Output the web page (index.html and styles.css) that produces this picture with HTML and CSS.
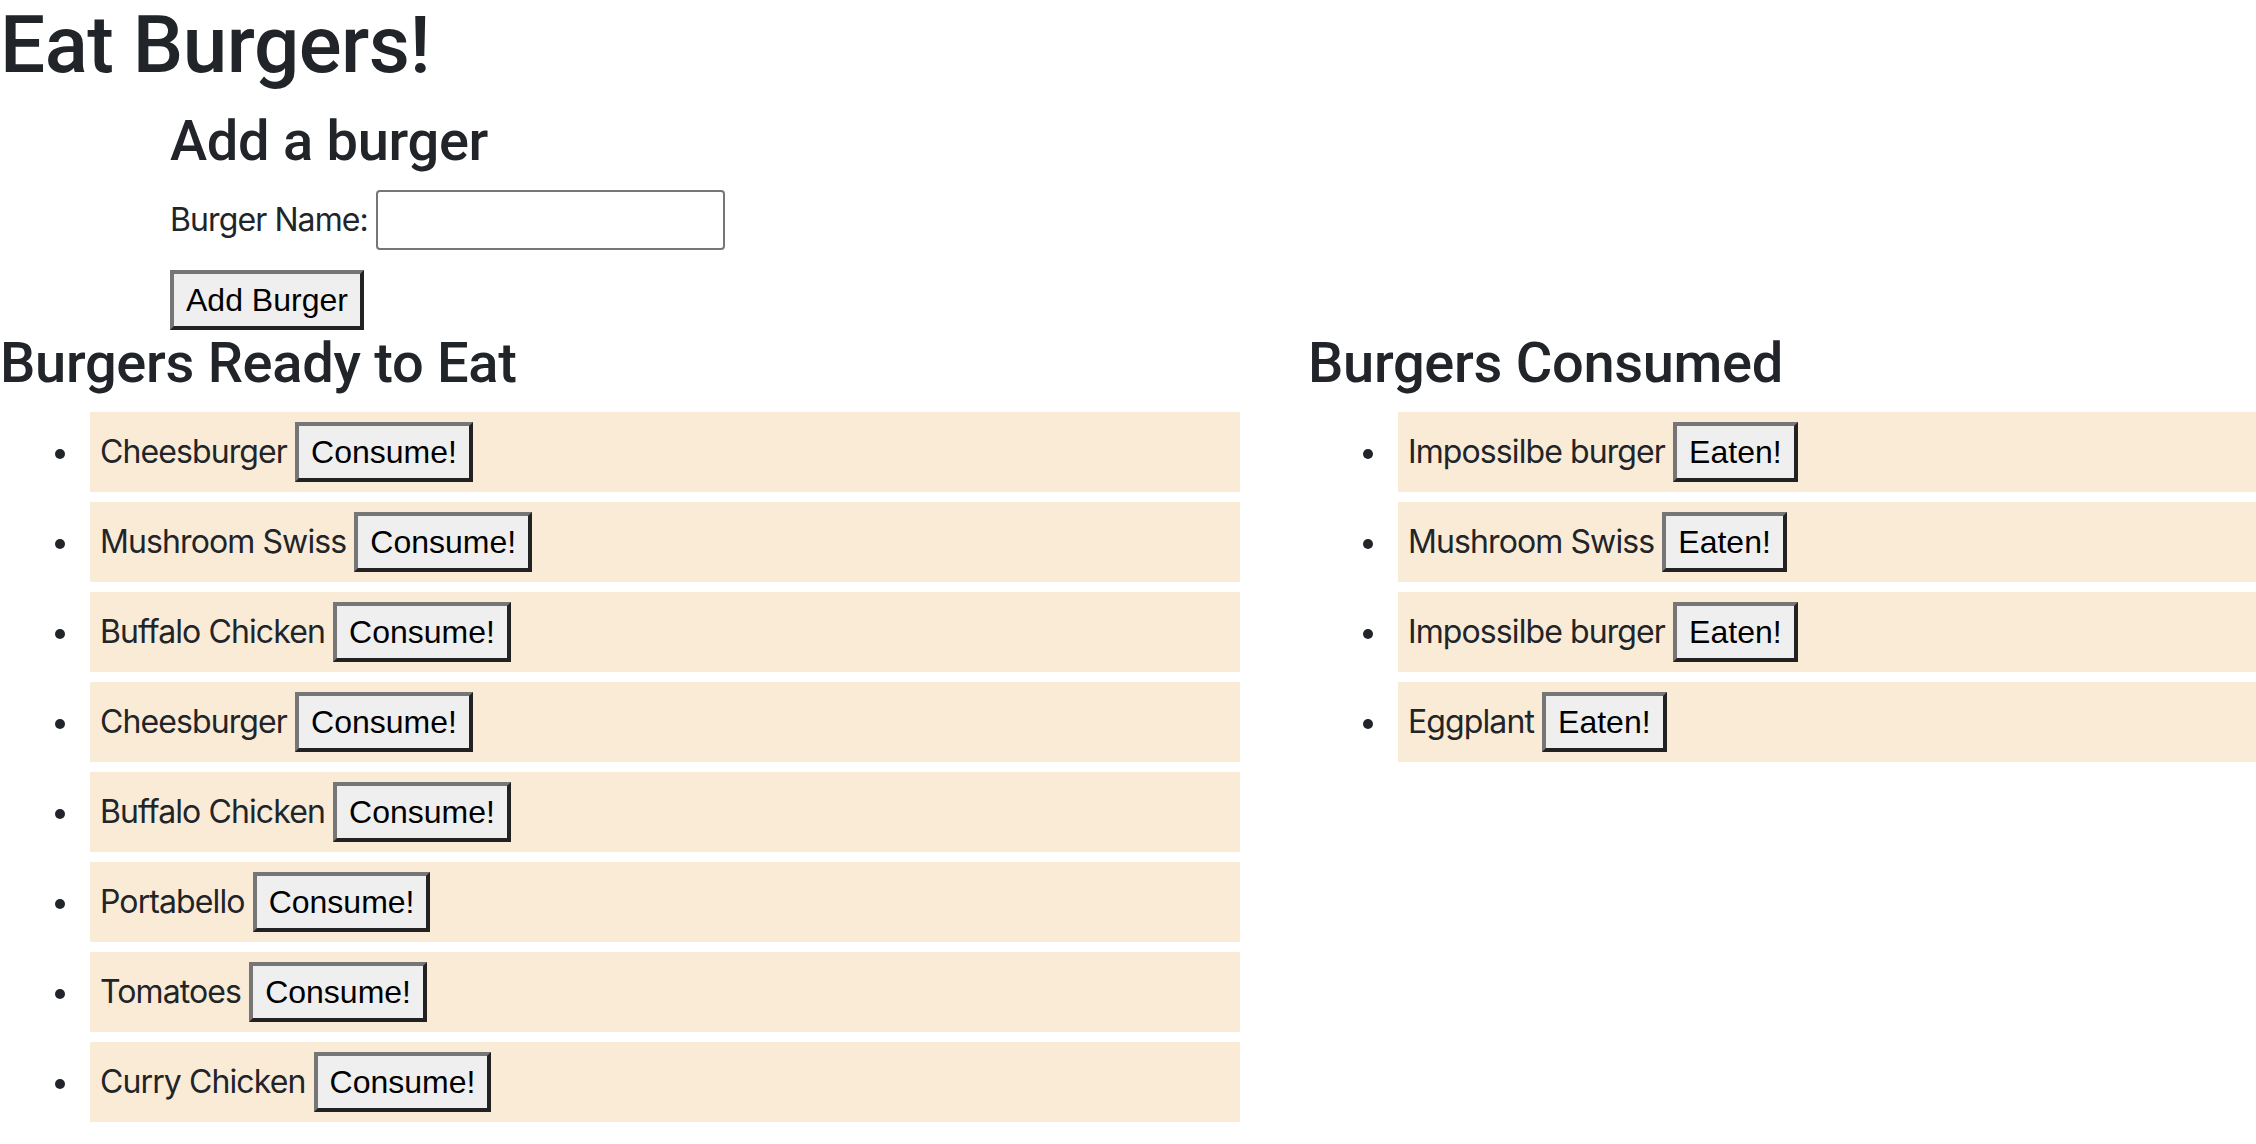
FILE: index.html
```html
<!DOCTYPE html>
<html lang="en">
<head>
<meta charset="utf-8">
<title>Eat Burgers!</title>
<link rel="stylesheet" href="styles.css">
</head>
<body>
<h1 class="title">Eat Burgers!</h1>
<div class="add">
  <h3 class="sub">Add a burger</h3>
  <form class="form">
    <div class="field">
      <label class="label" for="burger">Burger Name:</label>
      <input class="input" id="burger" type="text">
    </div>
    <button class="btn" type="button">Add Burger</button>
  </form>
</div>
<div class="cols">
  <section class="col">
    <h3 class="list-title">Burgers Ready to Eat</h3>
    <ul class="list">
      <li class="item">Cheesburger <button class="btn" type="button">Consume!</button></li>
      <li class="item">Mushroom Swiss <button class="btn" type="button">Consume!</button></li>
      <li class="item">Buffalo Chicken <button class="btn" type="button">Consume!</button></li>
      <li class="item">Cheesburger <button class="btn" type="button">Consume!</button></li>
      <li class="item">Buffalo Chicken <button class="btn" type="button">Consume!</button></li>
      <li class="item">Portabello <button class="btn" type="button">Consume!</button></li>
      <li class="item">Tomatoes <button class="btn" type="button">Consume!</button></li>
      <li class="item">Curry Chicken <button class="btn" type="button">Consume!</button></li>
    </ul>
  </section>
  <section class="col">
    <h3 class="list-title">Burgers Consumed</h3>
    <ul class="list">
      <li class="item">Impossilbe burger <button class="btn" type="button">Eaten!</button></li>
      <li class="item">Mushroom Swiss <button class="btn" type="button">Eaten!</button></li>
      <li class="item">Impossilbe burger <button class="btn" type="button">Eaten!</button></li>
      <li class="item">Eggplant <button class="btn" type="button">Eaten!</button></li>
    </ul>
  </section>
</div>
</body>
</html>
```

FILE: styles.css
```css
html, body {
  margin: 0;
  padding: 0;
}

body {
  font-family: Inter, "Noto Sans", "Liberation Sans", sans-serif;
  font-size: 32px;
  line-height: 1.5;
  letter-spacing: -0.9px;
  color: #212529;
  background: #ffffff;
}

.title {
  font-family: Roboto, Inter, "Liberation Sans", sans-serif;
  font-size: 80px;
  font-weight: 500;
  line-height: 90px;
  letter-spacing: -0.5px;
  margin: 0 0 18px 0;
}

.add {
  padding-left: 170px;
}

.sub {
  font-family: Roboto, Inter, "Liberation Sans", sans-serif;
  font-size: 56px;
  font-weight: 500;
  line-height: 1.2;
  letter-spacing: -0.3px;
  margin: 0 0 15px 0;
}

.form {
  display: flex;
  flex-direction: column;
  align-items: flex-start;
  gap: 20px;
  margin: 0;
}

.field {
  display: flex;
  align-items: center;
  gap: 8px;
}

.label {
  font-size: 32px;
}

.input {
  box-sizing: border-box;
  width: 349px;
  height: 60px;
  margin: 0;
  padding: 2px 4px;
  border: 2px solid #767676;
  border-radius: 4px;
  font: inherit;
  background: #ffffff;
}

.btn {
  margin: 0;
  padding: 2px 12px;
  font-family: "Liberation Sans", Arial, sans-serif;
  font-size: 32px;
  line-height: 48px;
  letter-spacing: 0;
  color: #000000;
  background: #efefef;
  border-width: 4px;
  border-style: solid;
  border-color: #767676 #222222 #222222 #767676;
  border-radius: 0;
}

.cols {
  display: grid;
  grid-template-columns: 1240px 1fr;
  column-gap: 68px;
}

.list-title {
  font-family: Roboto, Inter, "Liberation Sans", sans-serif;
  font-size: 56px;
  font-weight: 500;
  line-height: 1.2;
  letter-spacing: -0.3px;
  margin: 0 0 15px 0;
}

.list {
  margin: 0;
  padding-left: 90px;
  list-style: none;
}

.item {
  position: relative;
  background: #faebd7;
  padding: 10px;
  margin-bottom: 10px;
}

.item::before {
  content: "";
  position: absolute;
  left: -35px;
  top: 37px;
  width: 10px;
  height: 10px;
  border-radius: 50%;
  background: #212529;
}
```
